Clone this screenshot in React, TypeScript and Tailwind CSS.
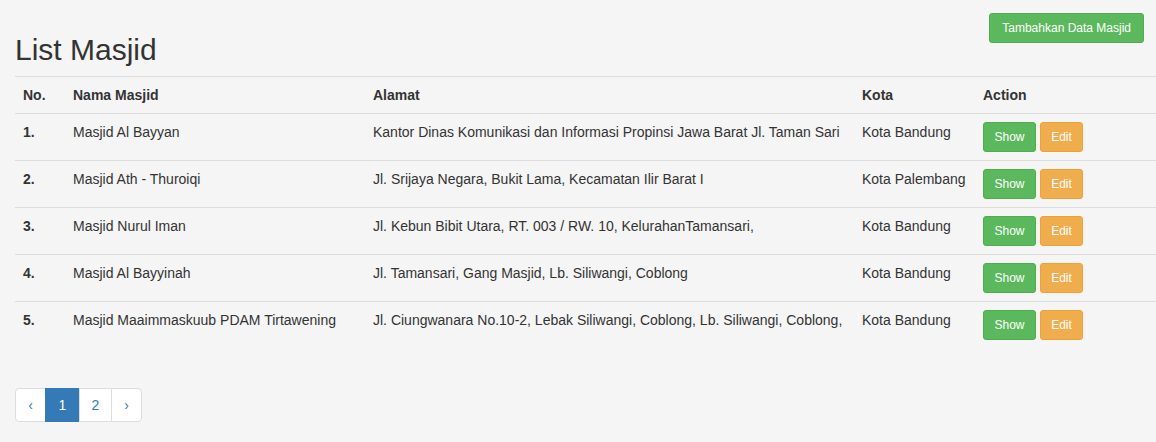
import React from "react";

const rows = [
  { no: "1.", nama: "Masjid Al Bayyan", alamat: "Kantor Dinas Komunikasi dan Informasi Propinsi Jawa Barat Jl. Taman Sari", kota: "Kota Bandung" },
  { no: "2.", nama: "Masjid Ath - Thuroiqi", alamat: "Jl. Srijaya Negara, Bukit Lama, Kecamatan Ilir Barat I", kota: "Kota Palembang" },
  { no: "3.", nama: "Masjid Nurul Iman", alamat: "Jl. Kebun Bibit Utara, RT. 003 / RW. 10, KelurahanTamansari,", kota: "Kota Bandung" },
  { no: "4.", nama: "Masjid Al Bayyinah", alamat: "Jl. Tamansari, Gang Masjid, Lb. Siliwangi, Coblong", kota: "Kota Bandung" },
  { no: "5.", nama: "Masjid Maaimmaskuub PDAM Tirtawening", alamat: "Jl. Ciungwanara No.10-2, Lebak Siliwangi, Coblong, Lb. Siliwangi, Coblong,", kota: "Kota Bandung" },
];

export default function App() {
  return (
    <div
      className="min-h-[442px] w-full bg-[#f5f5f5] pl-[15px] text-[14px] leading-[20px] text-[#333]"
      style={{ fontFamily: '"Liberation Sans", Arial, Helvetica, sans-serif' }}
    >
      <div className="flex items-start justify-between">
        <h2 className="mt-[33px] mb-[10px] text-[30px] leading-[33px] font-normal">List Masjid</h2>
        <button className="mt-[13px] mr-[12px] rounded-[3px] border border-[#4cae4c] bg-[#5cb85c] px-[12px] py-[4px] text-[12px] leading-[20px] text-white">
          Tambahkan Data Masjid
        </button>
      </div>
      <table className="mb-[20px] w-full table-fixed border-collapse">
        <colgroup>
          <col className="w-[50px]" />
          <col className="w-[300px]" />
          <col className="w-[489px]" />
          <col className="w-[121px]" />
          <col />
        </colgroup>
        <thead>
          <tr>
            {["No.", "Nama Masjid", "Alamat", "Kota", "Action"].map((h) => (
              <th key={h} className="border-t border-b border-[#ddd] p-[8px] text-left align-bottom font-bold">
                {h}
              </th>
            ))}
          </tr>
        </thead>
        <tbody>
          {rows.map((r) => (
            <tr key={r.no}>
              <td className="border-t border-[#ddd] p-[8px] align-top font-bold">{r.no}</td>
              <td className="border-t border-[#ddd] p-[8px] align-top whitespace-nowrap">{r.nama}</td>
              <td className="border-t border-[#ddd] p-[8px] align-top whitespace-nowrap">{r.alamat}</td>
              <td className="border-t border-[#ddd] p-[8px] align-top whitespace-nowrap">{r.kota}</td>
              <td className="border-t border-[#ddd] p-[8px] align-top">
                <div className="flex gap-[4px]">
                  <button className="h-[30px] w-[53px] rounded-[3px] border border-[#4cae4c] bg-[#5cb85c] text-[12px] leading-[18px] text-white">
                    Show
                  </button>
                  <button className="h-[30px] w-[43px] rounded-[3px] border border-[#eea236] bg-[#f0ad4e] text-[12px] leading-[18px] text-white">
                    Edit
                  </button>
                </div>
              </td>
            </tr>
          ))}
        </tbody>
      </table>
      <nav className="flex pt-[20px]">
        <span className="w-[31px] rounded-l-[4px] border border-[#ddd] bg-white py-[6px] text-center text-[#337ab7]">‹</span>
        <span className="-ml-px w-[35px] border border-[#337ab7] bg-[#337ab7] py-[6px] text-center text-white">1</span>
        <span className="-ml-px w-[33px] border border-[#ddd] bg-white py-[6px] text-center text-[#337ab7]">2</span>
        <span className="-ml-px w-[31px] rounded-r-[4px] border border-[#ddd] bg-white py-[6px] text-center text-[#337ab7]">›</span>
      </nav>
    </div>
  );
}
